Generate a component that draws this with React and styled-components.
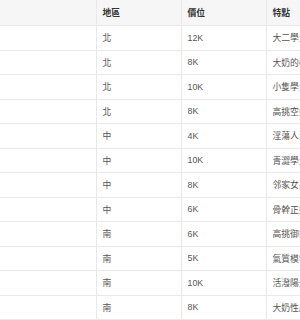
import React from "react";
import styled, { createGlobalStyle } from "styled-components";

const Global = createGlobalStyle`
  html, body { margin: 0; padding: 0; background: #fff; }
  body { overflow: hidden; width: 300px; height: 320px; }
`;

const Table = styled.div`
  width: 420px;
  font-family: "Liberation Sans", "Noto Sans CJK TC", sans-serif;
  font-size: 8.8px;
  color: #555;
`;

const Row = styled.div`
  display: grid;
  grid-template-columns: 97px 85px 85px 1fr;
  height: ${(p) => (p.$head ? "26px" : "24.5px")};
  background: ${(p) => (p.$head ? "#f6f6f6" : "#fff")};
  border-bottom: 1px solid #e8e8e8;
  box-sizing: border-box;
`;

const Cell = styled.div`
  display: flex;
  align-items: center;
  padding-left: 5.5px;
  border-right: 1px solid #e8e8e8;
  box-sizing: border-box;
  white-space: nowrap;
  overflow: hidden;
  font-weight: ${(p) => (p.$head ? 700 : 400)};
  color: ${(p) => (p.$head ? "#333" : "#555")};
`;

const rows = [
  ["北", "12K", "大二學生妹"],
  ["北", "8K", "大奶的OL上班族"],
  ["北", "10K", "小隻學生妹"],
  ["北", "8K", "高挑空姐"],
  ["中", "4K", "淫蕩人妻"],
  ["中", "10K", "青澀學生"],
  ["中", "8K", "邻家女孩"],
  ["中", "6K", "骨幹正妹"],
  ["南", "6K", "高挑御姐"],
  ["南", "5K", "氣質模特"],
  ["南", "10K", "活潑陽光"],
  ["南", "8K", "大奶性感"],
];

export default function App() {
  return (
    <>
      <Global />
      <Table>
        <Row $head>
          <Cell $head></Cell>
          <Cell $head>地區</Cell>
          <Cell $head>價位</Cell>
          <Cell $head>特點</Cell>
        </Row>
        {rows.map((r, i) => (
          <Row key={i}>
            <Cell></Cell>
            <Cell>{r[0]}</Cell>
            <Cell>{r[1]}</Cell>
            <Cell>{r[2]}</Cell>
          </Row>
        ))}
      </Table>
    </>
  );
}
